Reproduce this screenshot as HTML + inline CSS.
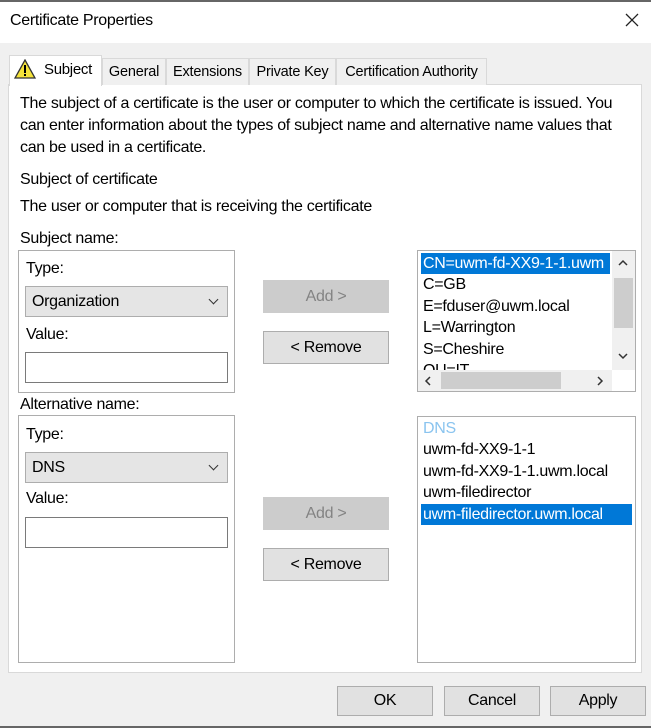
<!DOCTYPE html>
<html><head><style>
*{box-sizing:border-box;margin:0;padding:0}
body{width:651px;height:728px;background:#f0f0f0;font-family:"Liberation Sans",sans-serif;font-size:16px;color:#000;position:relative;overflow:hidden;letter-spacing:-0.3px}
.a{position:absolute;white-space:nowrap}
.box{position:absolute;border:1px solid #adadad;background:#fff}
.btn{position:absolute;background:#e1e1e1;border:1px solid #adadad;text-align:center;line-height:31px}
.combo{position:absolute;background:#e5e5e5;border:1px solid #adadad;padding-left:6px;line-height:29px}
.combo:after{content:"";position:absolute;right:10px;top:9px;width:6px;height:6px;border-right:1.3px solid #333;border-bottom:1.3px solid #333;transform:rotate(45deg)}
.inp{position:absolute;background:#fff;border:1px solid #7a7a7a}
.li{position:absolute;left:3px;height:21px;line-height:21px;padding-left:2px;white-space:nowrap}
.sel{background:#0078d7;color:#fff}
.tab{position:absolute;top:58px;height:27px;border:1px solid #d9d9d9;border-bottom:none;background:#f0f0f0;line-height:27px;font-size:14.5px;letter-spacing:-0.2px;white-space:nowrap;text-align:center}
</style></head><body>
<div class="a" style="left:0;top:0;width:651px;height:2px;background:#666"></div>
<div class="a" style="left:0;top:2px;width:651px;height:41px;background:#fff"></div>
<div class="a" style="left:10px;top:12px;font-size:16px">Certificate Properties</div>
<svg class="a" style="left:625px;top:13px" width="14" height="14"><path d="M1 1 L13 13 M13 1 L1 13" stroke="#222" stroke-width="1.3"/></svg>

<div class="a" style="left:8px;top:84px;width:634px;height:589px;background:#fff;border:1px solid #d9d9d9"></div>
<div class="tab" style="left:102px;width:64px">General</div>
<div class="tab" style="left:166px;width:83px">Extensions</div>
<div class="tab" style="left:249px;width:87px">Private Key</div>
<div class="tab" style="left:336px;width:151px">Certification Authority</div>
<div class="a" style="left:9px;top:55px;width:93px;height:31px;background:#fff;border:1px solid #d9d9d9;border-bottom:none"></div>
<svg class="a" style="left:14px;top:59px" width="22" height="20"><path d="M11 1 L21 19 L1 19 Z" fill="#f5e33a" stroke="#333" stroke-width="1.3"/><rect x="10" y="6" width="2" height="8" fill="#000"/><rect x="10" y="15" width="2" height="2" fill="#000"/></svg>
<div class="a" style="left:44px;top:61px;font-size:15px">Subject</div>

<div class="a" style="left:20px;top:93px;line-height:22px">The subject of a certificate is the user or computer to which the certificate is issued. You<br>can enter information about the types of subject name and alternative name values that<br>can be used in a certificate.</div>
<div class="a" style="left:20px;top:171px">Subject of certificate</div>
<div class="a" style="left:20px;top:198px">The user or computer that is receiving the certificate</div>
<div class="a" style="left:20px;top:230px">Subject name:</div>

<div class="box" style="left:18px;top:250px;width:217px;height:143px"></div>
<div class="a" style="left:26px;top:260px">Type:</div>
<div class="combo" style="left:25px;top:286px;width:203px;height:31px">Organization</div>
<div class="a" style="left:26px;top:326px">Value:</div>
<div class="inp" style="left:25px;top:352px;width:203px;height:31px"></div>

<div class="a" style="left:20px;top:396px">Alternative name:</div>
<div class="box" style="left:18px;top:415px;width:217px;height:248px"></div>
<div class="a" style="left:26px;top:426px">Type:</div>
<div class="combo" style="left:25px;top:452px;width:203px;height:31px">DNS</div>
<div class="a" style="left:26px;top:490px">Value:</div>
<div class="inp" style="left:25px;top:517px;width:203px;height:31px"></div>

<div class="btn" style="left:263px;top:280px;width:126px;height:33px;background:#ccc;border-color:#ccc;color:#838383">Add &gt;</div>
<div class="btn" style="left:263px;top:331px;width:126px;height:33px">&lt; Remove</div>
<div class="btn" style="left:263px;top:497px;width:126px;height:33px;background:#ccc;border-color:#ccc;color:#838383">Add &gt;</div>
<div class="btn" style="left:263px;top:548px;width:126px;height:33px">&lt; Remove</div>

<div class="box" style="left:417px;top:250px;width:219px;height:142px;overflow:hidden">
<div class="li sel" style="top:2px;width:189px;overflow:hidden">CN=uwm-fd-XX9-1-1.uwm</div>
<div class="li" style="top:23px">C=GB</div>
<div class="li" style="top:45px">E=fduser@uwm.local</div>
<div class="li" style="top:66px">L=Warrington</div>
<div class="li" style="top:88px">S=Cheshire</div>
<div class="li" style="top:109px">OU=IT</div>
<div class="a" style="left:194px;top:0;width:23px;height:119px;background:#f0f0f0"></div>
<div class="a" style="left:196px;top:27px;width:19px;height:50px;background:#cdcdcd"></div>
<svg class="a" style="left:200px;top:8px" width="10" height="8"><path d="M1 6 L5 2 L9 6" fill="none" stroke="#333" stroke-width="1.5"/></svg>
<svg class="a" style="left:200px;top:101px" width="10" height="8"><path d="M1 2 L5 6 L9 2" fill="none" stroke="#333" stroke-width="1.5"/></svg>
<div class="a" style="left:0;top:119px;width:217px;height:21px;background:#f0f0f0"></div>
<div class="a" style="left:23px;top:121px;width:120px;height:17px;background:#cdcdcd"></div>
<svg class="a" style="left:6px;top:125px" width="8" height="10"><path d="M6 1 L2 5 L6 9" fill="none" stroke="#333" stroke-width="1.5"/></svg>
<svg class="a" style="left:178px;top:125px" width="8" height="10"><path d="M2 1 L6 5 L2 9" fill="none" stroke="#333" stroke-width="1.5"/></svg>
<div class="a" style="left:194px;top:119px;width:23px;height:21px;background:#fff"></div>
</div>

<div class="box" style="left:417px;top:416px;width:219px;height:247px">
<div class="li" style="top:1px;color:#8ac4ef">DNS</div>
<div class="li" style="top:22px">uwm-fd-XX9-1-1</div>
<div class="li" style="top:44px">uwm-fd-XX9-1-1.uwm.local</div>
<div class="li" style="top:65px">uwm-filedirector</div>
<div class="li sel" style="top:87px;width:211px">uwm-filedirector.uwm.local</div>
</div>

<div class="btn" style="left:337px;top:686px;width:96px;height:30px;line-height:28px">OK</div>
<div class="btn" style="left:444px;top:686px;width:96px;height:30px;line-height:28px">Cancel</div>
<div class="btn" style="left:550px;top:686px;width:96px;height:30px;line-height:28px">Apply</div>
<div class="a" style="left:0;top:726px;width:651px;height:2px;background:#666"></div>
</body></html>
